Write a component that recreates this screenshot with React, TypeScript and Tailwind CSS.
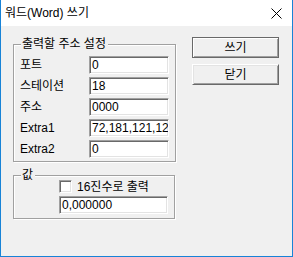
import React from "react";

const FONT = "font-['Liberation_Sans','Noto_Sans_CJK_KR',sans-serif]";

function Field({ value, className = "" }: { value: string; className?: string }) {
  return (
    <div
      className={`h-[18px] bg-white border border-t-[#a0a0a0] border-l-[#a0a0a0] border-r-white border-b-white shadow-[inset_1px_1px_0_#696969,inset_-1px_-1px_0_#e3e3e3] pl-[2px] overflow-hidden whitespace-nowrap leading-[16px] text-[12px] ${className}`}
    >
      {value}
    </div>
  );
}

function Group({
  title,
  className = "",
  children,
}: {
  title: string;
  className?: string;
  children: React.ReactNode;
}) {
  return (
    <div
      className={`relative border border-[#a0a0a0] shadow-[inset_1px_1px_0_#fff,1px_1px_0_#fff] ${className}`}
    >
      <div className="absolute left-[7px] top-[-8px] bg-[#f0f0f0] pl-[1px] pr-[2px] leading-[14px] text-[12px]">
        {title}
      </div>
      {children}
    </div>
  );
}

export default function App() {
  const rows: [string, string][] = [
    ["포트", "0"],
    ["스테이션", "18"],
    ["주소", "0000"],
    ["Extra1", "72,181,121,121"],
    ["Extra2", "0"],
  ];
  return (
    <div
      className={`w-[293px] h-[257px] bg-[#f0f0f0] border-x border-b border-[#1883d7] flex flex-col text-black text-[12px] ${FONT}`}
    >
      <div className="h-[26px] bg-white flex items-center justify-between pl-[4px] pr-[10px]">
        <span className="leading-[16px] text-[12px]">워드(Word) 쓰기</span>
        <svg width="11" height="11" viewBox="0 0 11 11" className="mt-[1px]">
          <path d="M0.5 0.5 L10.5 10.5 M10.5 0.5 L0.5 10.5" stroke="#000" strokeWidth="1" />
        </svg>
      </div>
      <div className="flex items-start pl-[12px]">
        <div className="flex flex-col mt-[18px] w-[163px]">
          <Group title="출력할 주소 설정" className="w-[163px] h-[118px] pt-[11px] pl-[6px]">
            <div className="flex flex-col gap-[3px]">
              {rows.map(([label, value]) => (
                <div key={label} className="flex items-center h-[18px]">
                  <span className="w-[69px] leading-[16px]">{label}</span>
                  <Field value={value} className="w-[80px]" />
                </div>
              ))}
            </div>
          </Group>
          <Group title="값" className="mt-[13px] w-[162px] h-[44px] pt-[4px] pl-[45px]">
            <div className="flex items-center h-[13px]">
              <div className="w-[13px] h-[13px] bg-white border border-t-[#a0a0a0] border-l-[#a0a0a0] border-r-white border-b-white shadow-[inset_1px_1px_0_#696969,inset_-1px_-1px_0_#e3e3e3]" />
              <span className="ml-[5px] leading-[14px]">16진수로 출력</span>
            </div>
            <Field value="0,000000" className="mt-[3px] w-[109px]" />
          </Group>
        </div>
        <div className="flex flex-col mt-[11px] ml-[16px] gap-[6px]">
          <button className="w-[87px] h-[21px] bg-[#f0f0f0] border border-[#696969] shadow-[inset_1px_1px_0_#fff,inset_-1px_-1px_0_#a0a0a0] leading-[16px] text-[12px] flex items-center justify-center">
            쓰기
          </button>
          <button className="w-[87px] h-[21px] bg-[#f0f0f0] border border-t-white border-l-white border-r-[#696969] border-b-[#696969] shadow-[inset_1px_1px_0_#e3e3e3,inset_-1px_-1px_0_#a0a0a0] leading-[16px] text-[12px] flex items-center justify-center">
            닫기
          </button>
        </div>
      </div>
    </div>
  );
}
